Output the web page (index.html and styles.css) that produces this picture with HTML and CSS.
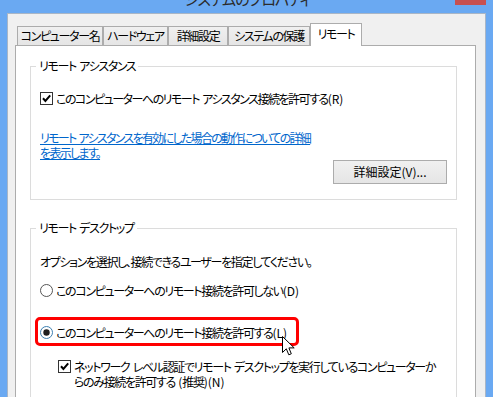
FILE: index.html
```html
<!DOCTYPE html>
<html lang="ja">
<head>
<meta charset="utf-8">
<title>システムのプロパティ</title>
<link rel="stylesheet" href="styles.css">
</head>
<body>
<div class="window">
  <div class="titlebar">
    <span class="title">システムのプロパティ</span>
    <span class="close"></span>
  </div>
  <div class="client">
    <div class="tabs">
      <div class="tab t1">コンピューター名</div>
      <div class="tab t2">ハードウェア</div>
      <div class="tab t3">詳細設定</div>
      <div class="tab t4">システムの保護</div>
      <div class="tab t5 selected">リモート</div>
    </div>
    <div class="panel">
      <fieldset class="group g1">
        <legend>リモート アシスタンス</legend>
        <div class="row check-row">
          <svg class="box" width="13" height="13" viewBox="0 0 13 13"><rect x="0.5" y="0.5" width="12" height="12" fill="#fff" stroke="#333"/><path d="M3 6.3l2.4 2.6L10.2 3.4" fill="none" stroke="#000" stroke-width="2"/></svg>
          <span class="tight">このコンピューターへのリモート アシスタンス接続を許可する<span class="lat">(R)</span></span>
        </div>
        <a class="link">リモート アシスタンスを有効にした場合の動作についての詳細<br>を表示します。</a>
        <div class="btn-row"><div class="button">詳細設定(V)...</div></div>
      </fieldset>
      <fieldset class="group g2">
        <legend>リモート デスクトップ</legend>
        <p class="intro">オプションを選択し、接続できるユーザーを指定してください。</p>
        <div class="row radio-row r1">
          <svg class="box" width="13" height="13" viewBox="0 0 13 13"><circle cx="6.5" cy="6.5" r="6" fill="#fff" stroke="#555"/></svg>
          <span>このコンピューターへのリモート接続を許可しない<span class="lat">(D)</span></span>
        </div>
        <div class="highlight">
          <div class="row radio-row">
            <svg class="box" width="13" height="13" viewBox="0 0 13 13"><circle cx="6.5" cy="6.5" r="6" fill="#fff" stroke="#3c7fb1"/><circle cx="6.5" cy="6.5" r="3.2" fill="#1f1f1f"/></svg>
            <span>このコンピューターへのリモート接続を許可する<span class="lat">(L)</span></span>
          </div>
        </div>
        <div class="row nla-row">
          <svg class="box" width="13" height="13" viewBox="0 0 13 13"><rect x="0.5" y="0.5" width="12" height="12" fill="#fff" stroke="#333"/><path d="M3 6.3l2.4 2.6L10.2 3.4" fill="none" stroke="#000" stroke-width="2"/></svg>
          <span>ネットワーク レベル認証でリモート デスクトップを実行しているコンピューターか<br>らのみ接続を許可する <span class="lat">(</span>推奨<span class="lat">)(N)</span></span>
        </div>
      </fieldset>
    </div>
  </div>
</div>
<svg class="cursor" width="13" height="20" viewBox="0 0 13 20"><path d="M0.5 0.5V16.5L4.3 12.8L6.8 18.8L9.3 17.8L6.9 11.9H12.2Z" fill="#fff" stroke="#000" stroke-linejoin="round"/></svg>
</body>
</html>
```
FILE: styles.css
```css
html, body {
  margin: 0;
  padding: 0;
}
body {
  width: 493px;
  height: 397px;
  overflow: hidden;
  background: #6aa9f2;
  position: relative;
  font-family: "Noto Sans CJK JP", "Noto Sans", sans-serif;
  font-feature-settings: "palt";
  font-size: 12px;
  line-height: 15px;
  letter-spacing: -1.35px;
  word-spacing: 2px;
  color: #000;
}
.lat {
  letter-spacing: 0;
}
.tight {
  letter-spacing: -1.5px;
}
.window {
  padding: 0 7px;
  height: 397px;
  box-sizing: border-box;
}
.titlebar {
  position: relative;
  height: 13px;
  overflow: hidden;
  text-align: center;
}
.title {
  display: block;
  font-size: 15px;
  line-height: 15px;
  margin-top: -9px;
  color: #2b2b2b;
  padding-left: 2px;
  letter-spacing: -1px;
}
.close {
  position: absolute;
  right: 0;
  top: 0;
  width: 31px;
  height: 5px;
  background: #c75050;
}
.client {
  background: #f0f0f0;
  border: 1px solid #a9b6c6;
  border-bottom: none;
  height: 384px;
  padding-top: 9px;
  box-sizing: border-box;
}
.tabs {
  display: flex;
  align-items: flex-end;
  height: 22px;
  margin-left: 9px;
}
.tab {
  box-sizing: border-box;
  height: 19px;
  border: 1px solid #acacac;
  border-bottom: none;
  background: linear-gradient(#f0f0f0, #e5e5e5);
  text-align: center;
  line-height: 17px;
  white-space: nowrap;
}
.t1 { width: 86px; }
.t2 { width: 65px; }
.t3 { width: 60px; }
.t4 { width: 82px; }
.t5 { width: 52px; }
.tab.selected {
  height: 23px;
  margin-bottom: -1px;
  background: #fff;
  position: relative;
  z-index: 1;
  line-height: 19px;
}
.panel {
  margin: 0 9px 0 7px;
  background: #fff;
  border: 1px solid #acacac;
  border-bottom: none;
  height: 352px;
  box-sizing: border-box;
  padding: 12px 18px 0 14px;
}
.group {
  margin: 0;
  padding: 0 0 0 9px;
  border: 1px solid #dcdcdc;
  min-width: 0;
}
.group legend {
  padding: 0 3px;
  margin-left: -4px;
  line-height: 16px;
}
.g1 {
  padding-bottom: 15px;
}
.g2 {
  margin-top: 20px;
  padding-bottom: 20px;
}
.row {
  display: flex;
  align-items: center;
  height: 15px;
  white-space: nowrap;
}
.row .box {
  flex: none;
  margin-right: 3px;
}
.check-row {
  margin-top: 17px;
}
.link {
  display: block;
  margin-top: 24px;
  color: #0066cc;
  text-decoration: underline;
  white-space: nowrap;
  letter-spacing: -1.7px;
}
.btn-row {
  display: flex;
  justify-content: flex-end;
  padding-right: 9px;
}
.button {
  width: 114px;
  height: 24px;
  box-sizing: border-box;
  border: 1px solid #acacac;
  background: linear-gradient(#f0f0f0, #e5e5e5);
  text-align: center;
  line-height: 22px;
  letter-spacing: 0;
}
.intro {
  margin: 18px 0 0;
}
.r1 {
  margin-top: 14px;
}
.highlight {
  display: inline-block;
  margin: 19px 0 0 -5px;
  border: 3px solid #f00;
  border-radius: 5px;
  padding: 5px 9px 3px 2px;
}
.nla-row {
  margin-top: 13px;
  margin-left: 18px;
  height: auto;
  align-items: flex-start;
}
.nla-row .box {
  margin-top: 1px;
}
.cursor {
  position: absolute;
  left: 282px;
  top: 336px;
}
```
